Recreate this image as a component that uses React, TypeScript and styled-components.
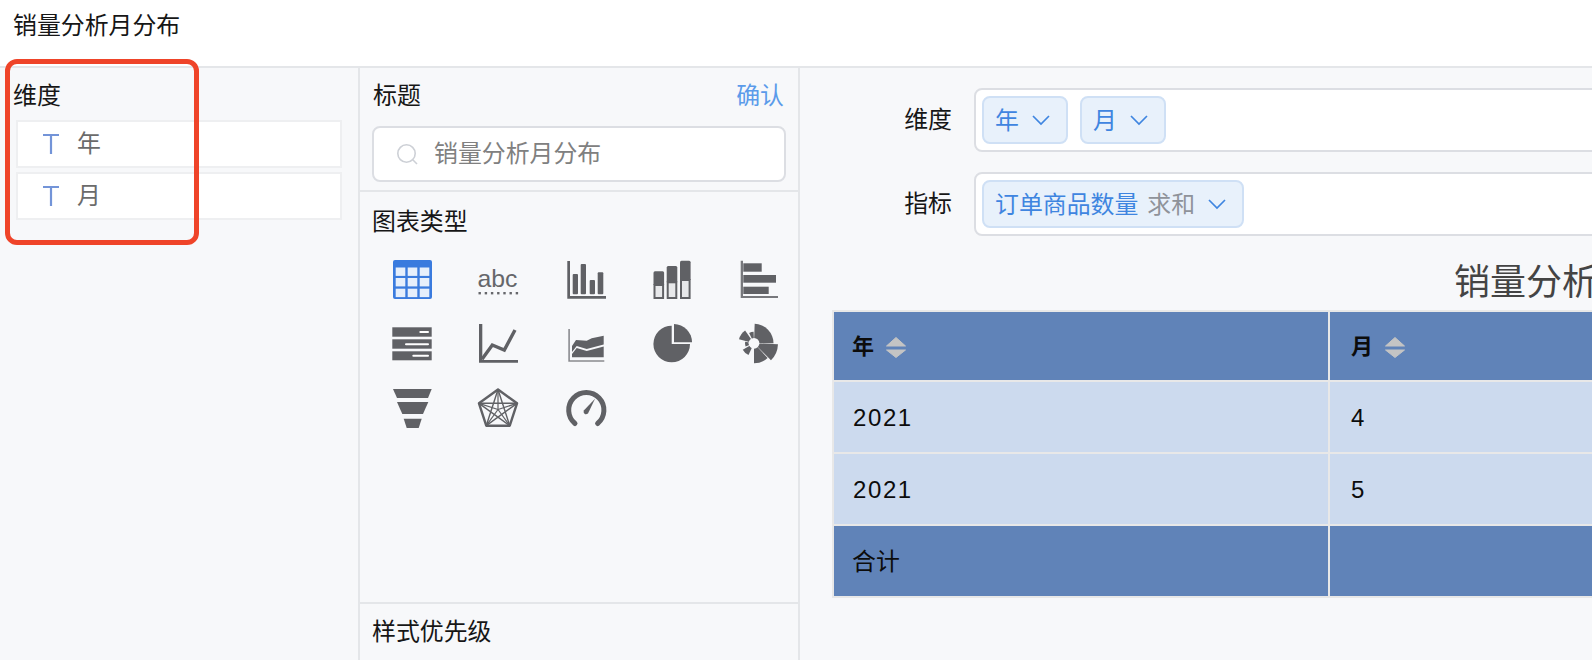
import { ReactNode } from 'react';
import { createGlobalStyle, styled } from 'styled-components';

const FONT = '"Liberation Sans", "Noto Sans CJK SC", sans-serif';
const GREY = '#606165';
const BORDER = '#e4e6e9';

const GlobalStyle = createGlobalStyle`
  * {
    box-sizing: border-box;
  }

  html,
  body {
    margin: 0;
    height: 100%;
    overflow: hidden;
    background: #fff;
    font-family: ${FONT};
  }
`;

const Page = styled.div`
  position: relative;
  width: 1592px;
  height: 660px;
  overflow: hidden;
  display: flex;
  flex-direction: column;
  color: #161616;
  font-size: 23.9px;
  line-height: 32px;
`;

const TopBar = styled.header`
  flex: none;
  height: 68px;
  padding: 10px 0 0 13px;
  background: #fff;
  border-bottom: 2px solid ${BORDER};
`;

const Body = styled.div`
  flex: 1;
  min-height: 0;
  display: flex;
  background: #f7f8fa;
`;

const FieldPanel = styled.aside`
  flex: none;
  width: 360px;
  padding-top: 12px;
  border-right: 2px solid ${BORDER};
`;

const FieldTitle = styled.div`
  padding-left: 13px;
  margin-bottom: 8px;
`;

const FieldList = styled.div`
  display: flex;
  flex-direction: column;
  gap: 4px;
  width: 326px;
  margin-left: 16px;
`;

const FieldRow = styled.div`
  height: 48px;
  display: flex;
  align-items: center;
  gap: 18px;
  padding-left: 25px;
  background: #fff;
  border: 2px solid #eeeff1;
  color: #6b6b6b;
`;

const Marker = styled.div`
  position: absolute;
  left: 5px;
  top: 59px;
  width: 194px;
  height: 186px;
  border: 5px solid #ef4429;
  border-radius: 12px;
  pointer-events: none;
`;

const ConfigPanel = styled.section`
  flex: none;
  width: 440px;
  display: flex;
  flex-direction: column;
  border-right: 2px solid ${BORDER};
`;

const TitleBlock = styled.div`
  padding: 12px 12px 8px;
  border-bottom: 2px solid ${BORDER};
`;

const TitleHead = styled.div`
  display: flex;
  justify-content: space-between;
  padding: 0 2px 0 1px;
  margin-bottom: 14px;
`;

const Confirm = styled.span`
  color: #5b9bea;
`;

const SearchBox = styled.div`
  height: 56px;
  display: flex;
  align-items: center;
  gap: 16px;
  padding-left: 23px;
  background: #fff;
  border: 2px solid #dcdee3;
  border-radius: 8px;
  color: #808080;
`;

const TypeBlock = styled.div`
  flex: 1;
  padding: 14px 0 0 12px;
`;

const TypeGrid = styled.div`
  display: grid;
  grid-template-columns: repeat(5, 87px);
  grid-template-rows: 64px 65px 40px;
  margin: 22px 0 0 20px;
`;

const PriorityBlock = styled.div`
  flex: none;
  height: 58px;
  padding: 12px 0 0 12px;
  border-top: 2px solid ${BORDER};
`;

const PreviewPanel = styled.main`
  flex: none;
  width: 1528px;
  padding-top: 20px;
`;

const FormRow = styled.div`
  display: flex;
  align-items: center;
  gap: 22px;
  margin-bottom: 20px;
`;

const FormLabel = styled.div`
  width: 152px;
  text-align: right;
`;

const DropBox = styled.div`
  flex: 1;
  height: 64px;
  display: flex;
  align-items: center;
  gap: 12px;
  padding: 0 6px;
  background: #fff;
  border: 2px solid #dcdee3;
  border-radius: 8px;
`;

const Tag = styled.div`
  height: 48px;
  display: flex;
  align-items: center;
  padding: 2px 16px 0 11px;
  background: #e8f1fb;
  border: 2px solid #cfe0f5;
  border-radius: 8px;
  color: #3f85e0;
`;

const TagMeta = styled.span`
  margin-left: 9px;
  color: #8f939a;
`;

const ChartTitle = styled.h2`
  margin: 23px 0 3px 32px;
  font-size: 36px;
  font-weight: 400;
  line-height: 48px;
  text-align: center;
  color: #444;
`;

const Table = styled.table`
  width: 1496px;
  margin-left: 32px;
  table-layout: fixed;
  border-collapse: separate;
  border-spacing: 2px;
  background: #e8e8e8;
  color: #0c0c0c;
`;

const HeadCell = styled.th`
  width: 494px;
  height: 68px;
  padding: 2px 18px 0;
  background: #6083b8;
  font-size: 22px;
  font-weight: 700;
  text-align: left;

  &:last-child {
    width: auto;
    padding-left: 21px;
  }
`;

const HeadInner = styled.div`
  display: flex;
  align-items: center;
  gap: 12px;
`;

const Cell = styled.td`
  height: 70px;
  padding: 2px 19px 0;
  background: #ccdaee;
  letter-spacing: 1.6px;
  font-size: 24px;

  &:last-child {
    padding-left: 21px;
  }
`;

const TotalCell = styled.td`
  height: 70px;
  padding: 2px 18px 0;
  background: #6083b8;
`;

const Icon = styled.svg`
  display: block;
  overflow: visible;
  fill: ${GREY};
`;

const ChevronIcon = styled(Icon)`
  margin: -2px 0 0 13px;
`;

const ChartIcon = ({ children }: { children: ReactNode }) => (
  <Icon width="40" height="40" viewBox="0 0 40 40">
    {children}
  </Icon>
);

const TextType = () => (
  <Icon width="16" height="20" viewBox="0 0 16 20">
    <path d="M0 1h16M8 1v19" stroke="#7394d8" strokeWidth="2.2" fill="none" />
  </Icon>
);

const Chevron = () => (
  <ChevronIcon width="18" height="10" viewBox="0 0 18 10">
    <path d="M1 1l8 8 8-8" stroke="#3f85e0" strokeWidth="1.7" fill="none" />
  </ChevronIcon>
);

const SearchIcon = () => (
  <Icon width="21" height="21" viewBox="0 0 21 21">
    <circle cx="9.5" cy="9.5" r="8.7" stroke="#cdd0d6" strokeWidth="1.6" fill="none" />
    <path d="M16 16l4 4" stroke="#cdd0d6" strokeWidth="1.6" fill="none" />
  </Icon>
);

const SortIcon = () => (
  <Icon width="20" height="21" viewBox="0 0 20 21">
    <path d="M10 0.5L19.5 9H0.5z" fill="#c4c4c4" stroke="#c4c4c4" strokeLinejoin="round" />
    <path d="M0.5 13H19.5L10 20.5z" fill="#c4c4c4" stroke="#c4c4c4" strokeLinejoin="round" />
  </Icon>
);

const polar = (cx: number, cy: number, r: number, deg: number) => {
  const a = ((deg - 90) * Math.PI) / 180;
  return [cx + r * Math.cos(a), cy + r * Math.sin(a)];
};

const wedge = (r: number, from: number, to: number) => {
  const [x0, y0] = polar(14, 19.3, r, from);
  const [x1, y1] = polar(14, 19.3, r, to);
  return `M14 19.3L${x0} ${y0}A${r} ${r} 0 0 1 ${x1} ${y1}Z`;
};

const pentagon = (r: number, order = [0, 72, 144, 216, 288]) =>
  order.map((d) => polar(19, 20.5, r, d).join(',')).join(' ');

const TableChart = () => (
  <ChartIcon>
    <rect x="1" y="0" width="39" height="39" rx="2" fill="#3a7bde" />
    {[7.5, 18, 28.7].map((y) =>
      [3.7, 15.7, 27.7].map((x) => (
        <rect key={`${x}-${y}`} x={x} y={y} width="9.6" height="8.4" fill="#e6effb" />
      )),
    )}
  </ChartIcon>
);

const TextChart = () => (
  <ChartIcon>
    <text x="-1.5" y="26.7" fontFamily={FONT} fontSize="24.8" fill="#66676b">
      abc
    </text>
    {[0, 1, 2, 3, 4, 5, 6].map((i) => (
      <rect key={i} x={-0.5 + i * 6.2} y="32" width="2.4" height="2.4" fill="#66676b" />
    ))}
  </ChartIcon>
);

const BarChart = () => (
  <ChartIcon>
    <path d="M1.3 1h2.7v35h36v2.7H1.3z" />
    <rect x="6.7" y="14" width="5.3" height="20.3" rx="1" />
    <rect x="14.7" y="4" width="5.3" height="30.3" rx="1" />
    <rect x="23.7" y="20" width="5.3" height="14.3" rx="1" />
    <rect x="31.7" y="12.3" width="5.6" height="22" rx="1" />
  </ChartIcon>
);

const StackedChart = () => (
  <ChartIcon>
    {[
      [0.5, 11.3, 25],
      [13.7, 6, 22.3],
      [27, 0.7, 20],
    ].map(([x, top, split]) => (
      <g key={x}>
        <rect x={x + 1} y={split} width="8.6" height={38 - split} fill="#e7e8ea" stroke={GREY} strokeWidth="2" />
        <path d={`M${x} ${split}V${top + 1.5}q0-1.5 1.5-1.5h7.6q1.5 0 1.5 1.5V${split}z`} />
      </g>
    ))}
  </ChartIcon>
);

const HorizontalChart = () => (
  <ChartIcon>
    <path d="M0.7 0.7h2.3V36h35v2H0.7z" fill="#77787c" />
    <rect x="3.3" y="3.3" width="18.4" height="8.4" />
    <rect x="3.3" y="15" width="32.7" height="7.7" />
    <rect x="3.3" y="26.7" width="25.4" height="7.3" />
  </ChartIcon>
);

const ListChart = () => (
  <ChartIcon>
    <rect x="0.3" y="3.3" width="39.4" height="9.4" />
    <rect x="0.3" y="15.3" width="39.4" height="9.4" />
    <rect x="0.3" y="27.3" width="39.4" height="9" />
    <rect x="27.3" y="7" width="9.7" height="2" fill="#fff" rx="1" />
    <rect x="13" y="19.3" width="24" height="2" fill="#fff" rx="1" />
    <rect x="20.3" y="30.7" width="16.7" height="2" fill="#fff" rx="1" />
  </ChartIcon>
);

const LineChart = () => (
  <ChartIcon>
    <path d="M0 0h3.3v36H39v2.7H0z" />
    <path d="M3 35.3L13.3 21l12 5L36 6" stroke={GREY} strokeWidth="3.4" fill="none" />
  </ChartIcon>
);

const AreaChart = () => (
  <ChartIcon>
    <path d="M2.3 5h1.6v31.2h34.4v1.5H2.3z" fill="#8a8b8f" />
    <path d="M6 22l4-6 10.7.7 5-2.4 12-2.6V20.5L20.7 25l-10-3L6 28z" />
    <path d="M6 30l4.7-6 10 3 17-4.5v10.8H6z" />
  </ChartIcon>
);

const PieChart = () => (
  <ChartIcon>
    <path d="M18.7 1.7A18.3 18.3 0 1 0 37 20H18.7z" />
    <path d="M21 0A18.3 18.3 0 0 1 39 18.3H21z" />
  </ChartIcon>
);

const RoseChart = () => (
  <ChartIcon>
    <path d={wedge(19.5, 2, 90)} />
    <path d={wedge(24, 92, 135)} />
    <path d={wedge(20, 137, 180)} />
    <path d={wedge(13, 205, 240)} />
    <path d={wedge(9, 250, 280)} />
    <path d={wedge(15.5, 285, 325)} />
    <path d={wedge(11.5, 335, 358)} />
    <circle cx="14" cy="19.3" r="5.4" fill="#f7f8fa" />
  </ChartIcon>
);

const FunnelChart = () => (
  <ChartIcon>
    <path d="M1 0h38.7L36 9H5z" />
    <path d="M5 13h31.3L31 25H10.3z" />
    <path d="M11.7 29.7h18L26.7 39H14.7z" />
  </ChartIcon>
);

const RadarChart = () => (
  <ChartIcon>
    <g fill="none" stroke={GREY} strokeLinejoin="round">
      <polygon points={pentagon(20)} strokeWidth="2.4" />
      <polygon points={pentagon(20, [0, 144, 288, 72, 216])} strokeWidth="1.4" />
      {[0, 72, 144, 216, 288].map((d) => (
        <path key={d} d={`M19 20.5L${polar(19, 20.5, 20, d).join(' ')}`} strokeWidth="1.2" />
      ))}
    </g>
  </ChartIcon>
);

const GaugeChart = () => (
  <ChartIcon>
    <path
      d="M9 34.5A17.6 17.6 0 1 1 31.6 34.5"
      stroke={GREY}
      strokeWidth="5"
      strokeLinecap="round"
      fill="none"
    />
    <path d="M29 9.7L22 24.5q-2 1.5-3.5 0.3t-0.7-3.3z" />
  </ChartIcon>
);

const CHARTS = [
  TableChart,
  TextChart,
  BarChart,
  StackedChart,
  HorizontalChart,
  ListChart,
  LineChart,
  AreaChart,
  PieChart,
  RoseChart,
  FunnelChart,
  RadarChart,
  GaugeChart,
];

const App = () => {
  return (
    <Page>
      <GlobalStyle />
      <TopBar>销量分析月分布</TopBar>
      <Body>
        <FieldPanel>
          <FieldTitle>维度</FieldTitle>
          <FieldList>
            {['年', '月'].map((name) => (
              <FieldRow key={name}>
                <TextType />
                {name}
              </FieldRow>
            ))}
          </FieldList>
        </FieldPanel>
        <ConfigPanel>
          <TitleBlock>
            <TitleHead>
              <span>标题</span>
              <Confirm>确认</Confirm>
            </TitleHead>
            <SearchBox>
              <SearchIcon />
              销量分析月分布
            </SearchBox>
          </TitleBlock>
          <TypeBlock>
            图表类型
            <TypeGrid>
              {CHARTS.map((Chart, i) => (
                <Chart key={i} />
              ))}
            </TypeGrid>
          </TypeBlock>
          <PriorityBlock>样式优先级</PriorityBlock>
        </ConfigPanel>
        <PreviewPanel>
          <FormRow>
            <FormLabel>维度</FormLabel>
            <DropBox>
              <Tag>
                年
                <Chevron />
              </Tag>
              <Tag>
                月
                <Chevron />
              </Tag>
            </DropBox>
          </FormRow>
          <FormRow>
            <FormLabel>指标</FormLabel>
            <DropBox>
              <Tag>
                订单商品数量
                <TagMeta>求和</TagMeta>
                <Chevron />
              </Tag>
            </DropBox>
          </FormRow>
          <ChartTitle>销量分析月分布</ChartTitle>
          <Table>
            <thead>
              <tr>
                <HeadCell>
                  <HeadInner>
                    年
                    <SortIcon />
                  </HeadInner>
                </HeadCell>
                <HeadCell>
                  <HeadInner>
                    月
                    <SortIcon />
                  </HeadInner>
                </HeadCell>
              </tr>
            </thead>
            <tbody>
              <tr>
                <Cell>2021</Cell>
                <Cell>4</Cell>
              </tr>
              <tr>
                <Cell>2021</Cell>
                <Cell>5</Cell>
              </tr>
              <tr>
                <TotalCell>合计</TotalCell>
                <TotalCell />
              </tr>
            </tbody>
          </Table>
        </PreviewPanel>
      </Body>
      <Marker />
    </Page>
  );
};

export default App;
